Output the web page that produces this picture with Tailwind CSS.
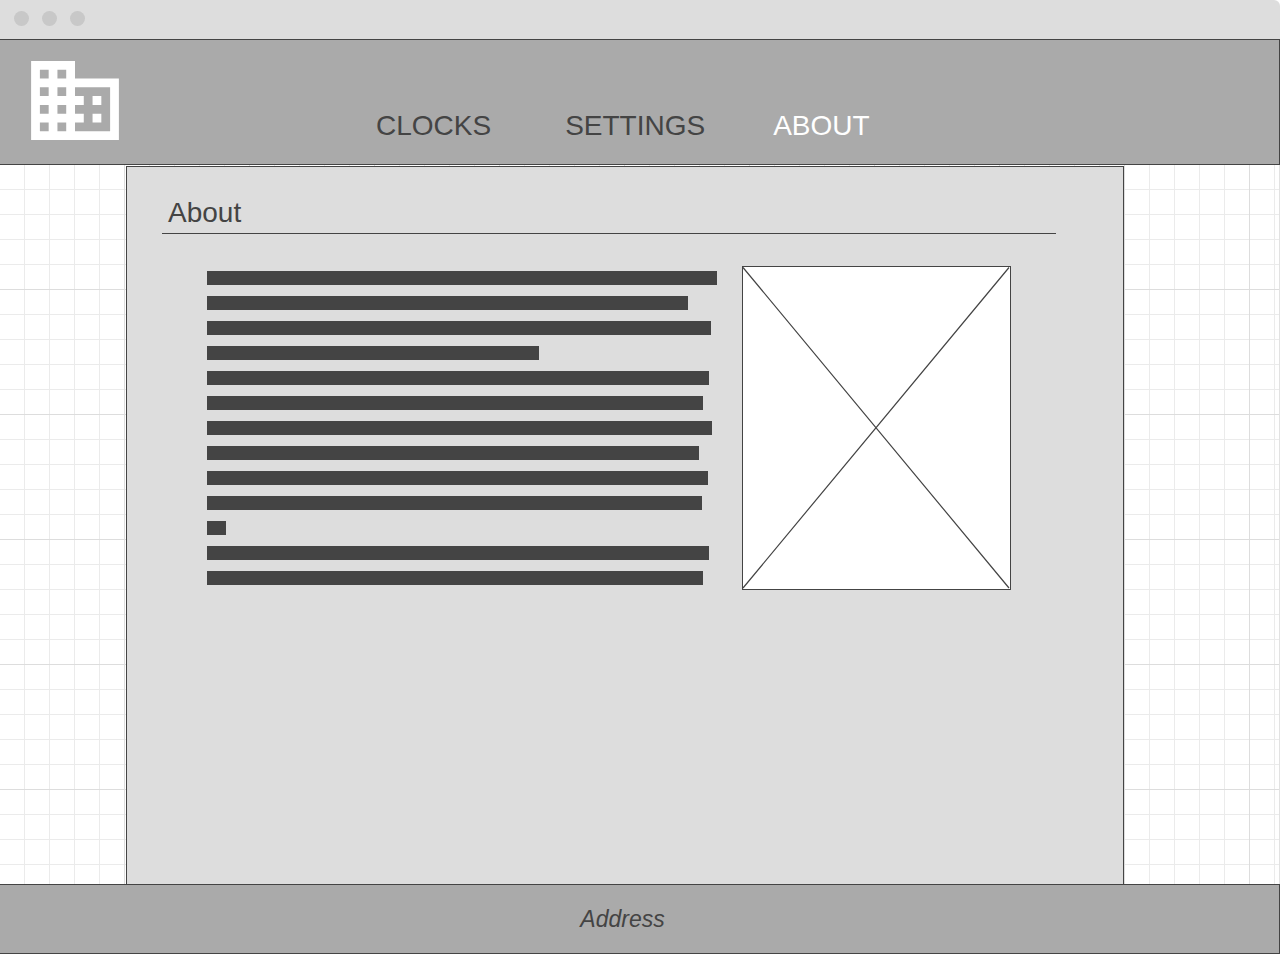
<!DOCTYPE html>
<html lang="en">
<head>
<meta charset="utf-8">
<meta name="viewport" content="width=device-width, initial-scale=1">
<title>About</title>
<script src="https://cdn.jsdelivr.net/npm/@tailwindcss/browser@4"></script>
</head>
<body class="flex min-h-screen flex-col bg-white font-['Liberation_Sans',Arial,sans-serif] text-[#444444]">
  <!-- Window title bar -->
  <div class="flex h-[39px] items-start gap-[13px] rounded-tr-md bg-[#dddddd] pt-[11px] pl-3.5">
    <span class="size-[15px] rounded-full bg-[#c8c8c8]"></span>
    <span class="size-[15px] rounded-full bg-[#c8c8c8]"></span>
    <span class="size-[15px] rounded-full bg-[#c8c8c8]"></span>
  </div>

  <header class="flex h-[126px] items-end border-y border-r border-[#444444] bg-[#aaaaaa]">
    <a href="#" aria-label="Home" class="mb-6 ml-[31px] block shrink-0">
      <svg class="h-[79px] w-[88px] fill-white" viewBox="2 3 20 18" aria-hidden="true">
        <path d="M12 7V3H2v18h20V7H12zM6 19H4v-2h2v2zm0-4H4v-2h2v2zm0-4H4V9h2v2zm0-4H4V5h2v2zm4 12H8v-2h2v2zm0-4H8v-2h2v2zm0-4H8V9h2v2zm0-4H8V5h2v2zm10 12h-8v-2h2v-2h-2v-2h2v-2h-2V9h8v10zm-2-8h-2v2h2v-2zm0 4h-2v2h2v-2z"/>
      </svg>
    </a>
    <nav class="mb-[22px] ml-[257px] flex text-[28px] leading-8">
      <a href="#clocks">CLOCKS</a>
      <a href="#settings" class="ml-[74px]">SETTINGS</a>
      <a href="#about" aria-current="page" class="ml-17 text-white">ABOUT</a>
    </nav>
  </header>

  <!-- Grid canvas: 25px minor lines, 125px major lines -->
  <main class="flex flex-1 border-r border-[#e2e2e2] bg-[linear-gradient(to_right,transparent_124px,#dddddd_124px),linear-gradient(to_bottom,transparent_124px,#dddddd_124px),linear-gradient(to_right,transparent_24px,#ebebeb_24px),linear-gradient(to_bottom,transparent_24px,#ebebeb_24px)] bg-[size:125px_125px,125px_125px,25px_25px,25px_25px] pt-px pr-[155px] pl-[126px]">
    <section class="flex-1 border-x border-t border-[#444444] bg-[#dddddd] pt-[30px] pr-[67px] pl-[35px]">
      <h1 class="border-b border-[#444444] pb-1 pl-1.5 text-[28px] leading-8">About</h1>
      <div class="mt-8 flex items-start gap-[25px] pl-[45px]">
        <div class="flex w-[510px] flex-col gap-[11px] pt-[5px]" role="img" aria-label="Text placeholder">
          <div class="h-3.5 w-[510px] bg-[#444444]"></div>
          <div class="h-3.5 w-[481px] bg-[#444444]"></div>
          <div class="h-3.5 w-[504px] bg-[#444444]"></div>
          <div class="h-3.5 w-[332px] bg-[#444444]"></div>
          <div class="h-3.5 w-[502px] bg-[#444444]"></div>
          <div class="h-3.5 w-[496px] bg-[#444444]"></div>
          <div class="h-3.5 w-[505px] bg-[#444444]"></div>
          <div class="h-3.5 w-[492px] bg-[#444444]"></div>
          <div class="h-3.5 w-[501px] bg-[#444444]"></div>
          <div class="h-3.5 w-[495px] bg-[#444444]"></div>
          <div class="h-3.5 w-[19px] bg-[#444444]"></div>
          <div class="h-3.5 w-[502px] bg-[#444444]"></div>
          <div class="h-3.5 w-[496px] bg-[#444444]"></div>
        </div>
        <svg class="h-[324px] w-[269px] shrink-0" viewBox="0 0 269 324" role="img" aria-label="Image placeholder">
          <rect x=".5" y=".5" width="268" height="323" fill="#ffffff" stroke="#444444"/>
          <path d="M1 1.5L267 322M267 1.5L1 322" stroke="#444444" stroke-width="1.2"/>
        </svg>
      </div>
    </section>
  </main>

  <footer class="mb-px flex h-[70px] items-center justify-center border-y border-r border-[#444444] bg-[#aaaaaa] pr-[34px]">
    <address class="text-[23px] leading-7 italic">Address</address>
  </footer>
</body>
</html>
